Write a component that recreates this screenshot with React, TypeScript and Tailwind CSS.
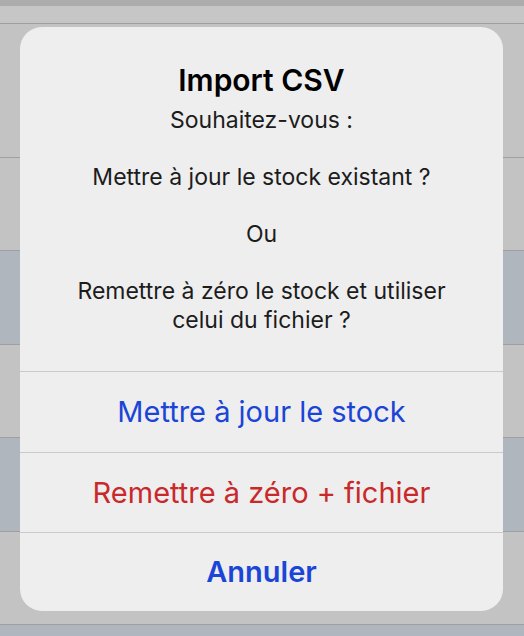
import React from 'react';

const rows = [
  { h: 'h-[6px]', bg: 'bg-[#acacac]' },
  { h: 'h-[17px]', bg: 'bg-[#c6c6c6]' },
  { h: 'h-[134px]', bg: 'bg-[#c3c3c3]', line: true },
  { h: 'h-[93px]', bg: 'bg-[#c3c3c3]', line: true },
  { h: 'h-[94px]', bg: 'bg-[#b0b6be]', line: true },
  { h: 'h-[93px]', bg: 'bg-[#c3c3c3]', line: true },
  { h: 'h-[94px]', bg: 'bg-[#b0b6be]', line: true },
  { h: 'h-[93px]', bg: 'bg-[#c3c3c3]', line: true },
  { h: 'h-[12px]', bg: 'bg-[#b0b6be]', line: true },
];

const message = `Souhaitez-vous :

Mettre à jour le stock existant ?

Ou

Remettre à zéro le stock et utiliser celui du fichier ?`;

export default function App() {
  return (
    <div className="relative h-[636px] w-[524px] overflow-hidden font-['Inter',sans-serif]">
      {/* dimmed table behind the alert */}
      <div className="flex flex-col">
        {rows.map((r, i) => (
          <div key={i} className={`${r.h} ${r.bg} ${r.line ? 'border-t border-[#9f9f9f]' : ''}`} />
        ))}
      </div>

      {/* alert */}
      <div className="absolute left-[20px] top-[27px] w-[483px] overflow-hidden rounded-[22px] bg-[#eeeeee]">
        <div className="px-[40px] pt-[35px] pb-[37px] text-center">
          <h2 className="text-[30px] leading-[36px] font-semibold text-black">Import CSV</h2>
          <p className="mt-[8px] whitespace-pre-line text-[23px] leading-[28.5px] text-[#1c1c1c]">
            {message}
          </p>
        </div>
        <button className="flex h-[81px] w-full items-center justify-center border-t-[1.5px] border-[#c9c9c9] text-[29px] text-[#1b45d6]">
          Mettre à jour le stock
        </button>
        <button className="flex h-[80px] w-full items-center justify-center border-t-[1.5px] border-[#c9c9c9] text-[29px] text-[#c9292b]">
          Remettre à zéro + fichier
        </button>
        <button className="flex h-[79px] w-full items-center justify-center border-t-[1.5px] border-[#c9c9c9] text-[29px] font-semibold text-[#1b45d6]">
          Annuler
        </button>
      </div>
    </div>
  );
}
